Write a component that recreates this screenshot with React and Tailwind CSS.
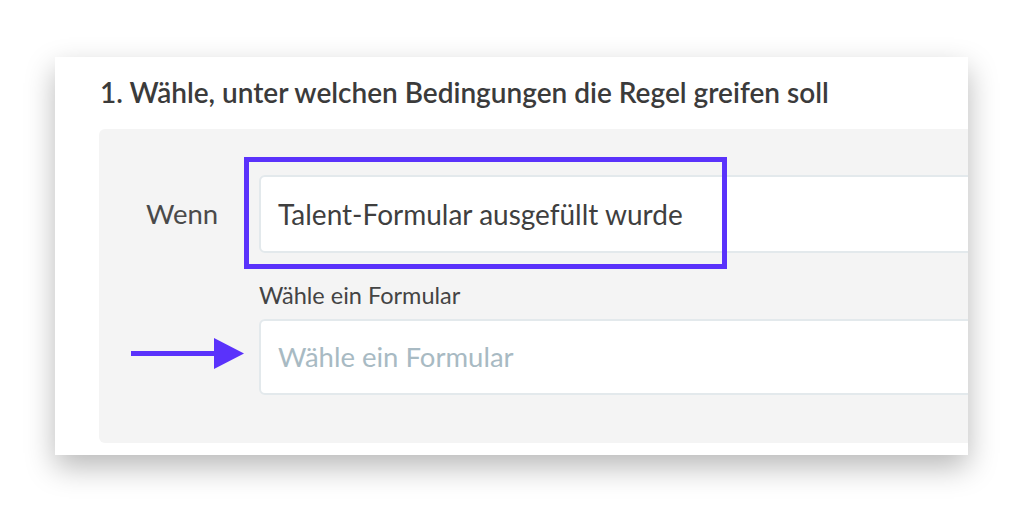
export default function App() {
  return (
    <div className="h-[511px] w-[1036px] bg-white overflow-hidden" style={{ fontFamily: "Lato, 'Open Sans', sans-serif" }}>
      <div className="ml-[55px] mt-[57px] h-[398px] w-[913px] overflow-hidden bg-white shadow-[0_12px_28px_rgba(0,0,0,0.28)]">
        {/* Step title */}
        <div className="pl-[45px] pt-[19px] h-[72px]">
          <h2 className="whitespace-nowrap text-[28px] font-semibold leading-[32px] text-[#3b3b3b]">
            1. Wähle, unter welchen Bedingungen die Regel greifen soll
          </h2>
        </div>

        {/* Condition panel */}
        <div className="relative ml-[44px] w-[1000px] rounded-md bg-[#f4f4f4] pl-[47px] pt-[46px] pb-[48px]">
          <div className="flex items-center">
            <span className="w-[113px] text-[27.5px] text-[#4a4a4a]">Wenn</span>
            <div className="flex h-[78px] w-[820px] items-center rounded-md border-2 border-[#e3e9ec] bg-white pl-[17px] text-[28px] text-[#3f3f3f]">
              Talent-Formular ausgefüllt wurde
            </div>
          </div>

          <div className="mt-[30px] flex">
            <div className="w-[113px]" />
            <div className="flex flex-col gap-[12px]">
              <label className="text-[23.5px] leading-[24px] text-[#444]">Wähle ein Formular</label>
              <div className="flex h-[76px] w-[820px] items-center rounded-md border-2 border-[#e3e9ec] bg-white pl-[17px] text-[27.5px] text-[#a8bac3]">
                Wähle ein Formular
              </div>
            </div>
          </div>

          {/* highlight box */}
          <div className="absolute left-[145px] top-[28px] h-[112px] w-[483px] border-[5px] border-[#5a32fb]" />

          {/* arrow */}
          <svg className="absolute left-[32px] top-[209px]" width="114" height="31" viewBox="0 0 114 31">
            <rect x="0" y="13" width="86" height="5" fill="#5a32fb" />
            <polygon points="83,0 113,15.5 83,31" fill="#5a32fb" />
          </svg>
        </div>
      </div>
    </div>
  )
}
